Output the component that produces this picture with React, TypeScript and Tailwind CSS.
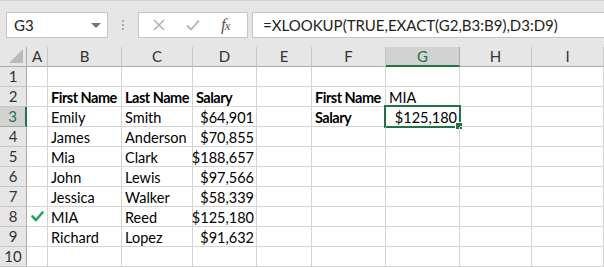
import React from 'react';

type Cell = { t: string; bold?: boolean; right?: boolean };

const cols = ['A', 'B', 'C', 'D', 'E', 'F', 'G', 'H', 'I'];

const rows: Record<number, Record<string, Cell>> = {
    1: {},
    2: {
        B: { t: 'First Name', bold: true },
        C: { t: 'Last Name', bold: true },
        D: { t: 'Salary', bold: true },
        F: { t: 'First Name', bold: true },
        G: { t: 'MIA' },
    },
    3: { B: { t: 'Emily' }, C: { t: 'Smith' }, D: { t: '$64,901', right: true }, F: { t: 'Salary', bold: true }, G: { t: '$125,180', right: true } },
    4: { B: { t: 'James' }, C: { t: 'Anderson' }, D: { t: '$70,855', right: true } },
    5: { B: { t: 'Mia' }, C: { t: 'Clark' }, D: { t: '$188,657', right: true } },
    6: { B: { t: 'John' }, C: { t: 'Lewis' }, D: { t: '$97,566', right: true } },
    7: { B: { t: 'Jessica' }, C: { t: 'Walker' }, D: { t: '$58,339', right: true } },
    8: { B: { t: 'MIA' }, C: { t: 'Reed' }, D: { t: '$125,180', right: true } },
    9: { B: { t: 'Richard' }, C: { t: 'Lopez' }, D: { t: '$91,632', right: true } },
    10: {},
};

const Check = () => (
    <svg width="13" height="11" viewBox="0 0 13 11" className="absolute left-[4px] top-[4px]">
        <polyline points="1.5,5.5 5,9 11.5,1.5" fill="none" stroke="#21a65a" strokeWidth="2.6" strokeLinecap="round" strokeLinejoin="round" />
    </svg>
);

const Toolbar = () => (
    <div className="h-[47px] flex items-start pt-[11px] pl-[6px] border-t border-[#d0d0d0]">
        <div className="w-[102px] h-[26px] bg-white border border-[#c6c6c6] flex items-center justify-between pl-[7px] pr-[6px]">
            <span className="text-[15px] text-[#222]">G3</span>
            <span className="w-0 h-0 border-l-[5px] border-r-[5px] border-t-[5px] border-l-transparent border-r-transparent border-t-[#777]" />
        </div>
        <div className="w-[30px] h-[26px] flex flex-col items-center justify-center gap-[2px]">
            <span className="w-[2px] h-[2px] bg-[#a9a9a9]" />
            <span className="w-[2px] h-[2px] bg-[#a9a9a9]" />
            <span className="w-[2px] h-[2px] bg-[#a9a9a9]" />
        </div>
        <div className="w-[110px] h-[26px] bg-white border border-[#c6c6c6] flex items-center">
            <svg width="12" height="12" viewBox="0 0 12 12" className="ml-[14px]">
                <path d="M1 1 L11 11 M11 1 L1 11" stroke="#b3b3b3" strokeWidth="1.6" />
            </svg>
            <svg width="14" height="12" viewBox="0 0 14 12" className="ml-[21px]">
                <path d="M1 6.5 L5 10.5 L13 1.5" fill="none" stroke="#b3b3b3" strokeWidth="1.8" />
            </svg>
            <span className="ml-[21px] text-[17px] italic text-[#555] font-['Liberation_Serif',serif] tracking-[-1px]">
                f<span className="text-[13px]">x</span>
            </span>
        </div>
        <div className="flex-1 ml-[4px] -mr-[2px] h-[26px] bg-white border border-[#c6c6c6] flex items-center pl-[10px]">
            <span className="text-[15px] text-[#222]">=XLOOKUP(TRUE,EXACT(G2,B3:B9),D3:D9)</span>
        </div>
    </div>
);

export default function App() {
    return (
        <div className="w-[604px] h-[267px] overflow-hidden bg-[#e6e6e6] font-['Lato','Open_Sans',sans-serif] text-black">
            <Toolbar />
            <div className="grid grid-cols-[27px_21px_74px_71px_64px_55px_74px_74px_72px_1fr] auto-rows-[20px] bg-white">
                <div className="relative bg-[#e6e6e6] border-r border-b border-[#ababab]">
                    <svg width="14" height="14" viewBox="0 0 14 14" className="absolute right-[3px] bottom-[3px]">
                        <polygon points="14,0 14,14 0,14" fill="#b9b9b9" />
                    </svg>
                </div>
                {cols.map((c) =>
                    c === 'G' ? (
                        <div key={c} className="bg-[#d2d2d2] border-r border-[#ababab] border-b-2 border-b-[#217346] flex items-center justify-center text-[15px] leading-none text-[#217346]">
                            {c}
                        </div>
                    ) : (
                        <div key={c} className="bg-[#e6e6e6] border-r border-b border-r-[#c6c6c6] border-b-[#ababab] flex items-center justify-center text-[15px] leading-none text-[#333]">
                            {c}
                        </div>
                    )
                )}
                {Object.keys(rows).map((rk) => {
                    const r = Number(rk);
                    const data = rows[r];
                    return (
                        <React.Fragment key={r}>
                            {r === 3 ? (
                                <div className="bg-[#d2d2d2] border-b border-[#ababab] border-r-2 border-r-[#217346] flex items-center justify-center text-[15px] leading-none text-[#217346]">
                                    {r}
                                </div>
                            ) : (
                                <div className="bg-[#e6e6e6] border-r border-b border-r-[#ababab] border-b-[#c6c6c6] flex items-center justify-center text-[15px] leading-none text-[#333]">
                                    {r}
                                </div>
                            )}
                            {cols.map((c) => {
                                const cell = data[c];
                                const sel = r === 3 && c === 'G';
                                return (
                                    <div
                                        key={c}
                                        className={`relative border-r border-b border-[#d4d4d4] flex items-center whitespace-nowrap text-[14.5px] leading-[19px] pt-[1px] ${
                                            cell?.right ? 'justify-end pr-[2px]' : 'pl-[3px]'
                                        } ${cell?.bold ? 'font-bold tracking-[-0.5px]' : ''}`}
                                    >
                                        {r === 8 && c === 'A' && <Check />}
                                        {cell?.t}
                                        {sel && (
                                            <>
                                                <span className="absolute left-[-2px] top-[-2px] w-[77px] h-[23px] border-2 border-[#217346]" />
                                                <span className="absolute left-[69px] top-[15px] w-[8px] h-[8px] bg-[#217346] border border-white" />
                                            </>
                                        )}
                                    </div>
                                );
                            })}
                        </React.Fragment>
                    );
                })}
            </div>
        </div>
    );
}
